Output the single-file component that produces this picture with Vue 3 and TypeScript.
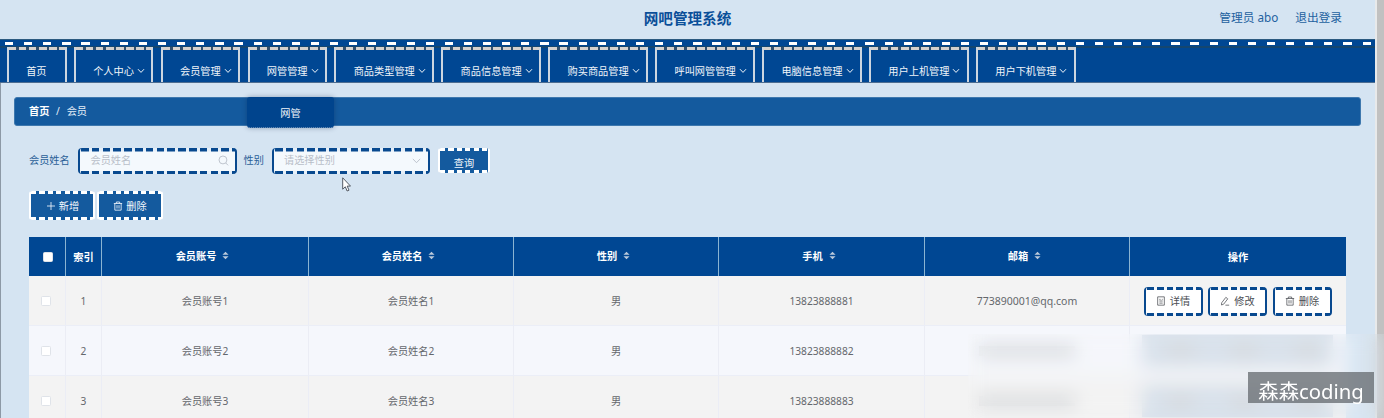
<script setup lang="ts">
interface Row { id: number; account: string; name: string; sex: string; phone: string; mail: string }

const menus: string[] = ['个人中心', '会员管理', '网管管理', '商品类型管理', '商品信息管理', '购买商品管理', '呼叫网管管理', '电脑信息管理', '用户上机管理', '用户下机管理']
const columns: string[] = ['会员账号', '会员姓名', '性别', '手机', '邮箱']
const rows: Row[] = [1, 2, 3].map((n) => ({
  id: n,
  account: '会员账号' + n,
  name: '会员姓名' + n,
  sex: '男',
  phone: '1382388888' + n,
  mail: n === 1 ? '773890001@qq.com' : '',
}))
</script>

<template>
  <div class="page">
    <header class="top">
      <h1>网吧管理系统</h1>
      <div class="user"><span>管理员 abo</span><span>退出登录</span></div>
    </header>

    <nav class="nav">
      <div class="tab home">首页</div>
      <div v-for="m in menus" :key="m" class="tab" :class="{ wide: m.length > 4 }">
        <span>{{ m }}</span>
        <svg class="chev" viewBox="0 0 8 6"><path d="M1 1.2 4 4.4 7 1.2" /></svg>
      </div>
    </nav>

    <main class="body">
      <div class="crumb"><b>首页</b><i>/</i><span>会员</span></div>

      <div class="filters">
        <label>会员姓名</label>
        <div class="field">
          <span>会员姓名</span>
          <svg viewBox="0 0 12 12" class="fi"><circle cx="5.4" cy="5.4" r="4.3" /><path d="M8.5 8.7 11 11.3" /></svg>
        </div>
        <label class="second">性别</label>
        <div class="field">
          <span>请选择性别</span>
          <svg viewBox="0 0 12 12" class="fi down"><path d="M2 4.2 6 8.4 10 4.2" /></svg>
        </div>
        <button class="solid query">查询</button>
      </div>

      <div class="actions">
        <button class="solid">
          <svg viewBox="0 0 12 12"><path d="M6 1.2V10.8M1.2 6H10.8" /></svg>新增
        </button>
        <button class="solid">
          <svg viewBox="0 0 12 12"><path d="M1 3H11M4 3V1.2H8V3M2.2 3V11H9.8V3M4.8 5V9M7.2 5V9" /></svg>删除
        </button>
      </div>

      <div class="table">
        <div class="tr head">
          <div><em class="check"></em></div>
          <div class="low">索引</div>
          <div v-for="c in columns" :key="c" class="sortable">
            <span>{{ c }}</span>
            <svg viewBox="0 0 8 10"><path d="M.5 4.2 4 .6 7.5 4.2zM.5 5.8 4 9.4 7.5 5.8z" /></svg>
          </div>
          <div class="low">操作</div>
        </div>
        <div v-for="r in rows" :key="r.id" class="tr">
          <div class="pick"><em class="check"></em></div>
          <div>{{ r.id }}</div>
          <div>{{ r.account }}</div>
          <div>{{ r.name }}</div>
          <div>{{ r.sex }}</div>
          <div>{{ r.phone }}</div>
          <div><span v-if="r.mail" class="mail">{{ r.mail }}</span><span v-else class="masked"></span></div>
          <div v-if="r.mail" class="ops">
            <button>
              <svg viewBox="0 0 12 12"><path d="M2 1H10V11H2zM4 4H5.5M4 6H8M4 8.5H8M7 4H8" /></svg>详情
            </button>
            <button>
              <svg viewBox="0 0 12 12"><path d="M2 8.2 7 1.6 9.3 3.4 4.4 9.8 1.8 10.8zM6.5 11H11" /></svg>修改
            </button>
            <button>
              <svg viewBox="0 0 12 12"><path d="M1 3H11M4 3V1.2H8V3M2.2 3V11H9.8V3M4.8 5V9M7.2 5V9" /></svg>删除
            </button>
          </div>
          <div v-else class="ops"><span v-for="n in 3" :key="n" class="ghost"></span></div>
        </div>
      </div>
    </main>

    <div class="submenu">网管</div>
    <div class="scrollbar"></div>
    <div class="haze"></div>
    <div class="mark"><span>森森coding</span></div>
    <svg class="cursor" viewBox="0 0 9 15"><path d="M.7.8V12.2L3.3 9.8 5.1 14 7 13.2 5.2 9.1H8.5z" /></svg>
  </div>
</template>

<style>
body { margin: 0; overflow: hidden; }
</style>

<style scoped>
.page {
  position: relative;
  box-sizing: border-box;
  width: 1384px;
  height: 418px;
  overflow: hidden;
  background: #d5e4f2;
  color: #64676c;
  font: 10.2px/14px "Noto Sans", "Noto Sans CJK SC", sans-serif;
}
svg { fill: none; stroke: currentColor; stroke-width: 1; }
button { font: inherit; color: inherit; border: 0; padding: 0; box-sizing: border-box; }
.top { position: relative; display: flex; justify-content: center; height: 39px; }
h1 { margin: 8px 0 0; padding-right: 9px; font-size: 14.6px; line-height: 20px; font-weight: 700; color: #0a4f99; }
.user { position: absolute; right: 42px; top: 8px; display: flex; gap: 17px; font-size: 11.7px; line-height: 18px; color: #23619f; }

.nav {
  display: flex;
  box-sizing: border-box;
  width: 1375.5px;
  height: 44px;
  padding: 8px 0 0 7px;
  gap: 7.35px;
  border-top: 1px solid #2c5a80;
  border-bottom: 1px solid #4d6d91;
  background:
    repeating-linear-gradient(90deg, transparent 0 5px, #fff 5px 13.2px, transparent 13.2px 19.12px) 0 1.5px / 100% 3px no-repeat,
    linear-gradient(#14466f, #14466f) 0 6px / 100% 2px no-repeat,
    #004793;
}
.tab {
  display: flex;
  flex: none;
  box-sizing: border-box;
  width: 79.5px;
  padding: 17px 0 0 17.2px;
  gap: 3px;
  color: #f0f5fa;
  border: solid #cdd6e0;
  border-width: 0 2px;
  margin-top: -1px;
  background: repeating-linear-gradient(90deg, #d5d1cd 0 7.4px, #31506f 7.4px 10.05px) 0 0 / 100% 3px no-repeat;
}
.tab.home { width: 59.6px; }
.tab.wide { width: 99.6px; }
.chev { width: 8px; height: 6px; margin-top: 4px; flex: none; }

.body { box-sizing: border-box; height: 335px; padding: 14px 23px 0 14px; border-left: 1px solid #8d99a6; }
.crumb {
  box-sizing: border-box;
  display: flex;
  align-items: center;
  height: 29px;
  width: 1347px;
  margin-left: -1px;
  padding: 0 0 1px 14px;
  border: 1px solid #3e78ae;
  border-radius: 3px;
  background: #145a9e;
  color: #e2edf8;
}
.crumb b { color: #fff; }
.crumb i { font-style: normal; margin: 0 7px 0 6.5px; }
.filters { display: flex; height: 26px; margin: 22px 0 0 14px; color: #2a5f97; }
.filters label { width: 49px; padding-top: 5px; }
.filters .second { width: 28px; margin-left: 7px; }
.field {
  display: flex;
  justify-content: space-between;
  box-sizing: border-box;
  width: 158.5px;
  padding: 5px 6px 0 10.5px;
  color: #b9bfc9;
  border: solid #08498f;
  border-width: 0 2px;
  border-radius: 4px;
  background:
    repeating-linear-gradient(90deg, #08498f 0 7.6px, #e6eff8 7.6px 10.8px) 1px 0 / 100% 3.5px no-repeat,
    repeating-linear-gradient(90deg, #08498f 0 7.6px, #e6eff8 7.6px 10.8px) 1px 100% / 100% 3.5px no-repeat,
    #f4f9fd;
}
.fi { width: 11px; height: 11px; margin-top: 2px; }
.solid {
  display: flex;
  justify-content: center;
  align-items: center;
  width: 66px;
  height: 29px;
  gap: 3px;
  color: #f2f7fc;
  border: solid #fff;
  border-width: 0 2px;
  border-radius: 3px;
  background:
    repeating-linear-gradient(90deg, #fff 0 5.2px, #145a9e 5.2px 8.4px) 0 0 / 100% 3px no-repeat,
    repeating-linear-gradient(90deg, #fff 0 5.2px, #145a9e 5.2px 8.4px) 0 100% / 100% 3px no-repeat,
    #145a9e;
}
.solid svg { width: 10px; height: 10px; }
.query { width: 52px; height: 25px; margin-left: 8px; padding-top: 4px; }
.actions { display: flex; gap: 1.5px; margin: 17px 0 0 14.4px; }

.table { width: 1317px; margin: 17px 0 0 14px; }
.tr {
  display: grid;
  grid-template-columns: 37px 36px 207px 205px 205px 206px 205px 216px;
  height: 50px;
  background: #f3f3f3;
}
.tr:nth-child(odd) { background: #f5f7fc; }
.tr > div {
  display: flex;
  align-items: center;
  justify-content: center;
  border-right: 1px solid #ebedf5;
  border-bottom: 1px solid #ebeef7;
  padding-top: 1px;
}
.tr.head { height: 39px; background: #004793; color: #fff; font-weight: 700; }
.tr.head > div { border-right-color: #8ab4d2; border-bottom: 0; padding-top: 0; }
.tr.head > div:last-child, .tr > div:last-child { border-right: 0; }
.tr.head .low { padding-top: 1px; }
.tr.head .sortable { gap: 6px; padding: 0 5px 2px 0; }
.sortable svg { width: 7px; height: 9px; stroke: none; fill: #b9c9db; }
.check { box-sizing: border-box; width: 10px; height: 10px; border: 1px solid #dfe3e9; border-radius: 1.5px; background: #fff; }
.tr.head .check { margin: 1px 0 0 1px; }
.tr .pick { padding-right: 3px; }
.mail { font-size: 10.5px; }
.masked { width: 96px; height: 10px; background: #cfd2d5; }
.tr .ops { gap: 5.5px; padding-right: 1px; color: #4b4e53; }
.ghost { width: 64px; height: 32px; margin: 0 -2.8px; background: radial-gradient(ellipse at 60% 50%, #d2d4d7 4px, #d5dfea 22px); }
.ops button {
  display: flex;
  align-items: center;
  justify-content: center;
  width: 59px;
  height: 29px;
  gap: 4px;
  border: solid #08498f;
  border-width: 0 2px;
  border-radius: 4px;
  background:
    repeating-linear-gradient(90deg, #08498f 0 6.8px, #f3f6fa 6.8px 9.8px) 1px 0 / 100% 3px no-repeat,
    repeating-linear-gradient(90deg, #08498f 0 6.8px, #f3f6fa 6.8px 9.8px) 1px 100% / 100% 3px no-repeat,
    #fff;
}
.ops svg { width: 10px; height: 10px; stroke-width: .9; }

.submenu {
  position: absolute;
  left: 247px;
  top: 97px;
  box-sizing: border-box;
  width: 87px;
  height: 31px;
  border-bottom: 1px dotted #7495b8;
  border-radius: 3px;
  background: #00448d;
  box-shadow: 0 0 5px rgba(0, 30, 70, .35);
  color: #f0f5fa;
  line-height: 32px;
  text-align: center;
}
.scrollbar { position: absolute; right: 0; top: 0; width: 7px; height: 418px; border-left: 2px solid #e8e9ea; background: #c1c1c1; }
.haze { position: absolute; left: 968px; top: 334px; width: 416px; height: 84px; backdrop-filter: blur(9px); background: rgba(244, 246, 250, .1); }
.mark {
  position: absolute;
  left: 1248px;
  top: 372px;
  width: 126px;
  height: 31px;
  background: rgba(101, 106, 112, .76);
  color: #fff;
  font-size: 20.3px;
  line-height: 39px;
  text-align: center;
}
.cursor { position: absolute; left: 342px; top: 177px; width: 9px; height: 15px; fill: #fff; stroke: #454b55; stroke-width: .9; }
</style>
